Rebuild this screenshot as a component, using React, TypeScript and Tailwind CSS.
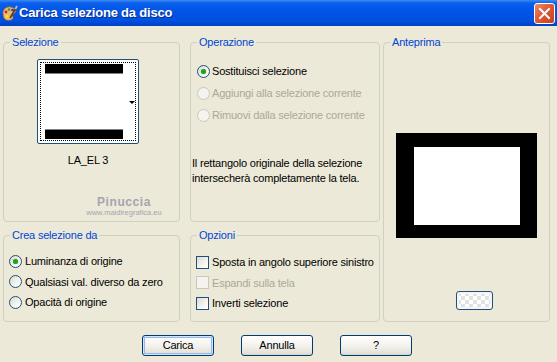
import React from "react";

const font = "font-['Liberation_Sans',Arial,sans-serif]";

const Radio = ({ checked = false, disabled = false }: { checked?: boolean; disabled?: boolean }) => (
  <span
    className={`flex h-[13px] w-[13px] shrink-0 items-center justify-center rounded-full border ${
      disabled
        ? "border-[#cac8bb] bg-[#f4f3ee]"
        : "border-[#1c5180] bg-[linear-gradient(135deg,#dcd9cf_0%,#f5f4ef_60%,#ffffff_100%)]"
    }`}
  >
    {checked && <span className="h-[5px] w-[5px] rounded-full bg-[#21a121] shadow-[0_0_1px_#5fd35f]" />}
  </span>
);

const Check = ({ disabled = false }: { disabled?: boolean }) => (
  <span
    className={`h-[13px] w-[13px] shrink-0 border ${
      disabled
        ? "border-[#cac8bb] bg-[#f4f3ee]"
        : "border-[#1c5180] bg-[linear-gradient(135deg,#dcd9cf_0%,#f5f4ef_60%,#ffffff_100%)]"
    }`}
  />
);

interface OptionRowProps {
  label: string;
  disabled?: boolean;
  children: React.ReactNode;
}

const OptionRow: React.FC<OptionRowProps> = ({ label, disabled = false, children }) => (
  <div className="flex h-[20.5px] items-center gap-[3px]">
    {children}
    <span className={`whitespace-nowrap ${disabled ? "text-[#aca899]" : "text-black"}`}>{label}</span>
  </div>
);

const Group = ({
  title,
  className,
  children,
}: {
  title: string;
  className: string;
  children?: React.ReactNode;
}) => (
  <fieldset className={`rounded-[4px] border border-[#d0d0bf] ${className}`}>
    <legend className="ml-[6px] px-[2px] leading-[13px] text-[#0046d5]">{title}</legend>
    {children}
  </fieldset>
);

const Button = ({ label, isDefault = false }: { label: string; isDefault?: boolean }) => (
  <button
    className={`h-[21px] w-[72px] rounded-[3px] border border-[#003c74] bg-[linear-gradient(to_bottom,#ffffff_0%,#f3f2ee_50%,#e4e2d7_90%,#d6d0c5_100%)] text-black ${
      isDefault ? "shadow-[inset_0_0_0_1px_#cee7ff,inset_0_0_0_2px_#98b8ea]" : ""
    }`}
  >
    {label}
  </button>
);

const Palette = () => (
  <svg width="17" height="17" viewBox="0 0 17 17">
    <path
      d="M2 9 C1 4 6 1 10 2 C14 3 16 6 14 8 C12 9 11 9 12 12 C13 15 8 16 5 15 C3 14 2 12 2 9 Z"
      fill="#e9b77a"
      stroke="#8a5a2a"
      strokeWidth="0.8"
    />
    <circle cx="5" cy="7" r="1.4" fill="#d22" />
    <circle cx="8" cy="4.5" r="1.3" fill="#2a2" />
    <circle cx="11.5" cy="5" r="1.3" fill="#23c" />
    <circle cx="6" cy="11.5" r="1.4" fill="#ee0" />
    <path d="M9 13 L15 3" stroke="#5a3a1a" strokeWidth="1.5" />
    <path d="M14.3 4.2 L16 1" stroke="#c0c0c0" strokeWidth="1.8" />
  </svg>
);

export default function App() {
  return (
    <div className={`h-[362px] w-[557px] overflow-hidden bg-[#ece9d8] text-[11px] tracking-[-0.2px] ${font}`}>
      {/* title bar */}
      <div className="flex h-[26px] items-center bg-[linear-gradient(to_bottom,#3c8cf3_0%,#0a5fec_12%,#0054e6_45%,#0050e0_80%,#0040c4_100%)] pl-[1px] pr-[2px]">
        <Palette />
        <span className="ml-[1px] flex-1 text-[13px] font-bold tracking-[-0.2px] text-white [text-shadow:1px_1px_0_#0b2e88]">
          Carica selezione da disco
        </span>
        <div className="flex h-[21px] w-[21px] items-center justify-center rounded-[3px] border border-white bg-[linear-gradient(135deg,#ec8c6c_0%,#e05a34_45%,#c4401c_100%)]">
          <svg width="13" height="13" viewBox="0 0 13 13">
            <path d="M2 2 L11 11 M11 2 L2 11" stroke="white" strokeWidth="2" strokeLinecap="square" />
          </svg>
        </div>
      </div>

      {/* groups */}
      <div className="flex px-[3px] pt-[10px]">
        <div className="flex w-[177px] flex-col gap-[7px]">
          <Group title="Selezione" className="h-[186px]">
            <div className="flex flex-col">
              <div className="ml-[33px] mt-[10px] flex w-[102px] flex-col items-center">
                <div className="relative h-[85px] w-[102px] rounded-[2px] border border-[#1c5180] bg-white p-[2px]">
                  <div className="flex h-full w-full flex-col justify-between border border-dotted border-black py-[1px] pl-[4px]">
                    <div className="h-[10px] w-[78px] border-b border-[#808080] bg-black" />
                    <div className="h-[10px] w-[78px] border-t border-[#808080] bg-black" />
                  </div>
                  <span className="absolute right-[3px] top-[41px] h-0 w-0 border-x-[3px] border-t-[3px] border-x-transparent border-t-black" />
                </div>
                <span className="mt-[10px] leading-[13px] text-black">LA_EL 3</span>
              </div>
              <div className="ml-[77px] mt-[29px] flex w-[86px] flex-col items-center leading-none">
                <span className="text-[12px] font-bold tracking-[0.6px] text-[#a4a4b0]">Pinuccia</span>
                <span className="mt-[1px] text-[7.5px] tracking-[0px] text-[#a4a4b0]">www.maidiregrafica.eu</span>
              </div>
            </div>
          </Group>
          <Group title="Crea selezione da" className="h-[93px]">
            <div className="flex flex-col pl-[5px] pt-[9px]">
              <OptionRow label="Luminanza di origine">
                <Radio checked />
              </OptionRow>
              <OptionRow label="Qualsiasi val. diverso da zero">
                <Radio />
              </OptionRow>
              <OptionRow label="Opacità di origine">
                <Radio />
              </OptionRow>
            </div>
          </Group>
        </div>

        <div className="ml-[10px] flex w-[190px] flex-col gap-[7px]">
          <Group title="Operazione" className="h-[186px]">
            <div className="flex flex-col pl-[6px] pt-[11px]">
              <div className="flex h-[22px] items-center gap-[2px]">
                <Radio checked />
                <span>Sostituisci selezione</span>
              </div>
              <div className="flex h-[22px] items-center gap-[2px]">
                <Radio disabled />
                <span className="text-[#aca899]">Aggiungi alla selezione corrente</span>
              </div>
              <div className="flex h-[22px] items-center gap-[2px]">
                <Radio disabled />
                <span className="text-[#aca899]">Rimuovi dalla selezione corrente</span>
              </div>
            </div>
            <p className="ml-[1px] mt-[30px] leading-[15px] text-black">
              Il rettangolo originale della selezione
              <br />
              intersecherà completamente la tela.
            </p>
          </Group>
          <Group title="Opzioni" className="h-[93px]">
            <div className="flex flex-col pl-[5px] pt-[10px]">
              <OptionRow label="Sposta in angolo superiore sinistro">
                <Check />
              </OptionRow>
              <OptionRow label="Espandi sulla tela" disabled>
                <Check disabled />
              </OptionRow>
              <OptionRow label="Inverti selezione">
                <Check />
              </OptionRow>
            </div>
          </Group>
        </div>

        <div className="ml-[3px] w-[167px]">
          <Group title="Anteprima" className="h-[286px]">
            <div className="flex flex-col">
              <div className="ml-[12px] mt-[84px] h-[105px] w-[141px] border-b-[13px] border-l-[18px] border-r-[17px] border-t-[14px] border-black bg-white" />
              <div className="ml-[72px] mt-[53px] h-[19px] w-[37px] rounded-[3px] border border-[#1c5180] bg-[conic-gradient(#ffffff_25%,#e2e2e2_0_50%,#ffffff_0_75%,#e2e2e2_0)] bg-[length:8px_8px] shadow-[inset_0_0_0_2px_#f4f4f4]" />
            </div>
          </Group>
        </div>
      </div>

      {/* buttons */}
      <div className="mt-[13px] flex gap-[27px] pl-[142px]">
        <Button label="Carica" isDefault />
        <Button label="Annulla" />
        <Button label="?" />
      </div>
    </div>
  );
}
